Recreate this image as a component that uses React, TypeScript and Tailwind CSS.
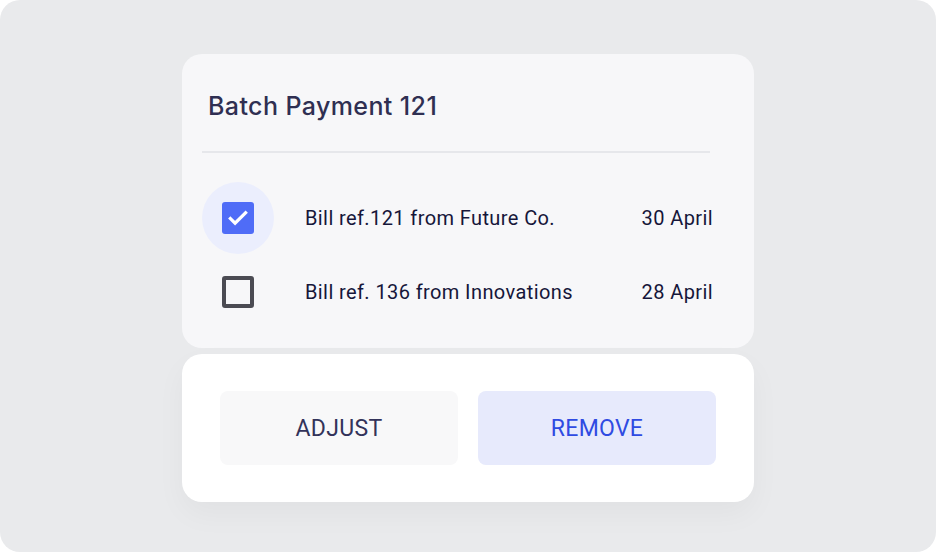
import { useState } from 'react';

type Bill = { id: number; label: string; date: string };

const bills: Bill[] = [
  { id: 121, label: 'Bill ref.121 from Future Co.', date: '30 April' },
  { id: 136, label: 'Bill ref. 136 from Innovations', date: '28 April' },
];

const Checkbox = ({ checked, onToggle }: { checked: boolean; onToggle: () => void }) => (
  <button
    type="button"
    onClick={onToggle}
    className={`flex h-[72px] w-[72px] items-center justify-center rounded-full ${checked ? 'bg-[#ebeefd]' : ''}`}
  >
    {checked ? (
      <span className="flex h-[32px] w-[32px] items-center justify-center rounded-[3px] bg-[#4f6cf7]">
        <svg viewBox="0 0 24 24" className="h-[28px] w-[28px]" fill="none" stroke="#fff" strokeWidth="2.8" strokeLinecap="square">
          <path d="M5.5 12.5l4 4 9-9" />
        </svg>
      </span>
    ) : (
      <span className="h-[32px] w-[32px] rounded-[3px] border-[4px] border-[#4b4b53]" />
    )}
  </button>
);

export default function App() {
  const [selected, setSelected] = useState<number[]>([121]);

  const toggle = (id: number) =>
    setSelected((s) => (s.includes(id) ? s.filter((x) => x !== id) : [...s, id]));

  return (
    <div className="h-[552px] w-[936px] bg-white">
      <div className="flex h-full w-full flex-col items-center rounded-[20px] bg-[#e9eaec] pt-[54px]">
        <div className="flex h-[294px] w-[572px] flex-col rounded-[20px] bg-[#f7f7f9]">
          <h1
            className="pl-[26px] pt-[35px] text-[25px] leading-[34px] font-medium text-[#2f2f52]"
            style={{ fontFamily: 'Inter, "Open Sans", sans-serif', letterSpacing: '0.4px' }}
          >
            Batch Payment 121
          </h1>
          <div className="ml-[20px] mr-[44px] mt-[28px] h-[2px] bg-[#e6e7eb]" />
          <div className="mt-[29px] flex flex-col" style={{ fontFamily: 'Roboto, sans-serif', letterSpacing: '0.4px' }}>
            {bills.map((bill, i) => (
              <div key={bill.id} className={`flex items-center ${i > 0 ? 'mt-[2px]' : ''}`}>
                <div className="ml-[20px]">
                  <Checkbox checked={selected.includes(bill.id)} onToggle={() => toggle(bill.id)} />
                </div>
                <span className="ml-[31px] text-[20px] text-[#16163a]">{bill.label}</span>
                <span className="ml-auto mr-[41px] text-[20px] text-[#16163a]">{bill.date}</span>
              </div>
            ))}
          </div>
        </div>

        <div
          className="mt-[6px] grid h-[148px] w-[572px] grid-cols-2 gap-[20px] rounded-[20px] bg-white px-[38px] py-[37px] shadow-[0_12px_30px_rgba(0,0,0,0.04)]"
          style={{ fontFamily: 'Roboto, sans-serif', letterSpacing: '0.3px' }}
        >
          <button className="rounded-[8px] bg-[#f8f8f9] pt-[2px] text-[23px] text-[#33335a]">ADJUST</button>
          <button className="rounded-[8px] bg-[#e7eafc] pt-[2px] text-[23px] text-[#2f4be2]">REMOVE</button>
        </div>
      </div>
    </div>
  );
}
